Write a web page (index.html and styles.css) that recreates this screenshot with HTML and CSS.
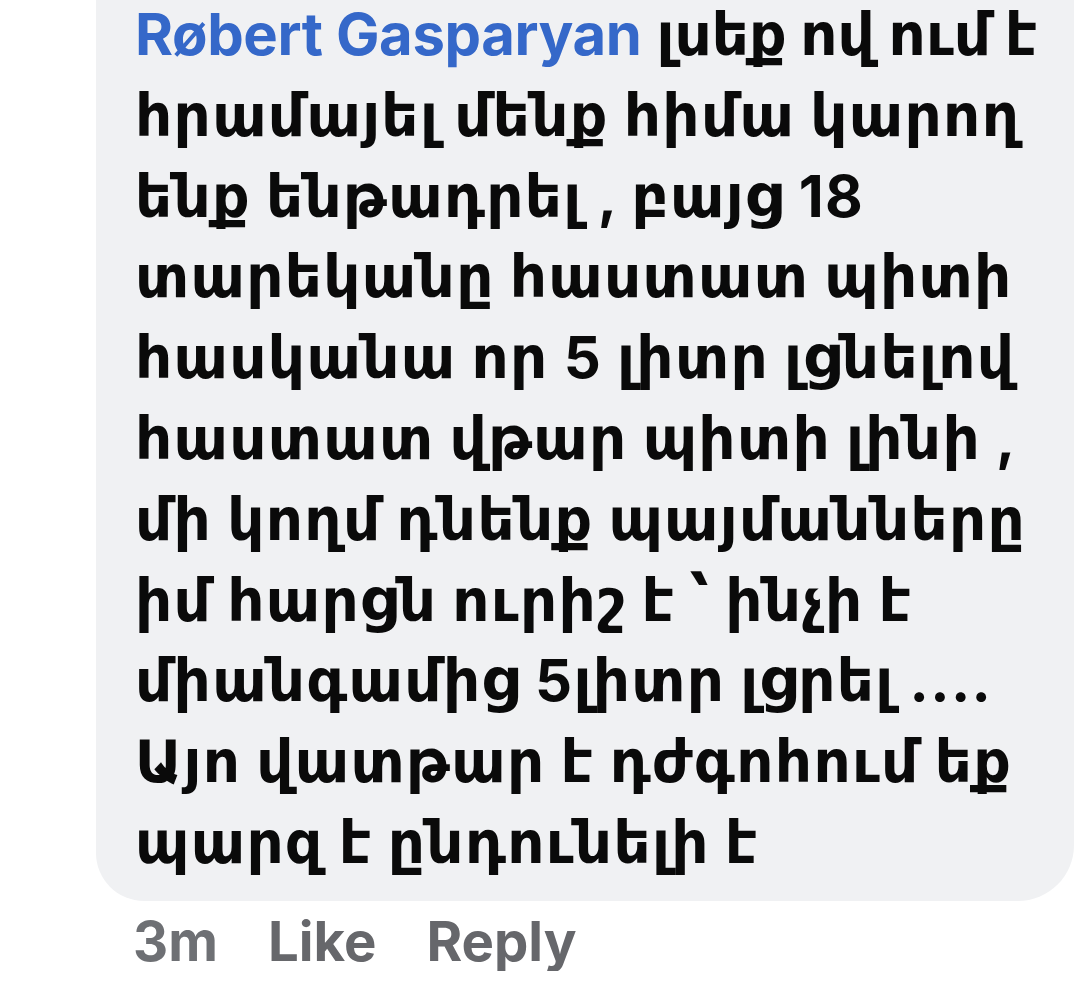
FILE: index.html
```html
<!DOCTYPE html>
<html lang="hy">
<head>
<meta charset="utf-8">
<link rel="stylesheet" href="styles.css">
</head>
<body>
<div class="comment">
  <div class="bubble">
    <p class="text"><span class="name">Røbert Gasparyan</span> <span class="first">լսեք ով ում է</span><br>հրամայել մենք հիմա կարող<br>ենք ենթադրել , բայց 18<br>տարեկանը հաստատ պիտի<br>հասկանա որ 5 լիտր լցնելով<br>հաստատ վթար պիտի լինի ,<br>մի կողմ դնենք պայմանները<br>իմ հարցն ուրիշ է ՝ ինչի է<br>միանգամից 5լիտր լցրել ....<br>Այո վատթար է դժգոհում եք<br>պարզ է ընդունելի է</p>
  </div>
  <div class="meta">
    <span class="time">3m</span>
    <span class="action">Like</span>
    <span class="action">Reply</span>
  </div>
</div>
</body>
</html>
```
FILE: styles.css
```css
html, body {
  margin: 0;
  padding: 0;
  background: #ffffff;
}
.comment {
  padding-left: 96px;
  width: 978px;
}
.bubble {
  background: #f0f1f3;
  border-radius: 0 0 56px 48px;
  padding: 0 0 18px 39px;
}
.text {
  margin: -6px 0 0 0;
  font-family: "Inter", "DejaVu Sans", sans-serif;
  font-weight: 700;
  font-size: 58px;
  letter-spacing: 1.3px;
  line-height: 80.8px;
  color: #0a0a0a;
  white-space: nowrap;
}
.first {
  letter-spacing: 0;
}
.name {
  color: #3568c9;
  font-weight: 650;
  letter-spacing: -0.4px;
}
.meta {
  display: flex;
  gap: 50px;
  padding: 10px 0 0 37px;
  font-family: "Inter", "Liberation Sans", sans-serif;
  font-weight: 700;
  font-size: 54.5px;
  line-height: 60px;
}
.time {
  color: #6e7074;
}
.action {
  color: #66676b;
}
```
